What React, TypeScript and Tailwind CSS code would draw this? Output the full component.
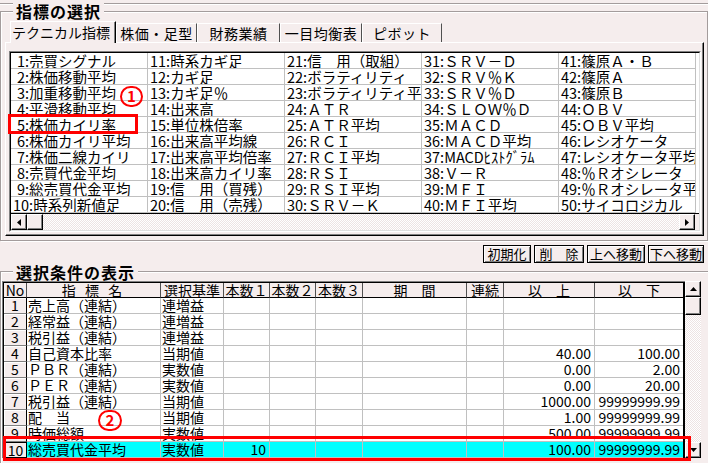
import React from "react";

const upperCols: string[][] = [
  ["売買シグナル", "株価移動平均", "加重移動平均", "平滑移動平均", "株価カイリ率", "株価カイリ平均", "株価二線カイリ", "売買代金平均", "総売買代金平均", "時系列新値足"],
  ["時系カギ足", "カギ足", "カギ足％", "出来高", "単位株倍率", "出来高平均線", "出来高平均倍率", "出来高カイリ率", "信　用（買残）", "信　用（売残）"],
  ["信　用（取組）", "ボラティリティ", "ボラティリティ平", "ＡＴＲ", "ＡＴＲ平均", "ＲＣＩ", "ＲＣＩ平均", "ＲＳＩ", "ＲＳＩ平均", "ＳＲＶ－Ｋ"],
  ["ＳＲＶ－Ｄ", "ＳＲＶ％Ｋ", "ＳＲＶ％Ｄ", "ＳＬＯＷ％Ｄ", "ＭＡＣＤ", "ＭＡＣＤ平均", "MACDﾋｽﾄｸﾞﾗﾑ", "Ｖ－Ｒ", "ＭＦＩ", "ＭＦＩ平均"],
  ["篠原Ａ・Ｂ", "篠原Ａ", "篠原Ｂ", "ＯＢＶ", "ＯＢＶ平均", "レシオケータ", "レシオケータ平均", "％Ｒオシレータ", "％Ｒオシレータ平", "サイコロジカル"],
];

const rows = [
  { name: "売上高（連結）", kijun: "連増益", hon1: "", ijo: "", ika: "" },
  { name: "経常益（連結）", kijun: "連増益", hon1: "", ijo: "", ika: "" },
  { name: "税引益（連結）", kijun: "連増益", hon1: "", ijo: "", ika: "" },
  { name: "自己資本比率", kijun: "当期値", hon1: "", ijo: "40.00", ika: "100.00" },
  { name: "ＰＢＲ（連結）", kijun: "実数値", hon1: "", ijo: "0.00", ika: "2.00" },
  { name: "ＰＥＲ（連結）", kijun: "実数値", hon1: "", ijo: "0.00", ika: "20.00" },
  { name: "税引益（連結）", kijun: "当期値", hon1: "", ijo: "1000.00", ika: "99999999.99" },
  { name: "配　当", kijun: "当期値", hon1: "", ijo: "1.00", ika: "99999999.99" },
  { name: "時価総額", kijun: "実数値", hon1: "", ijo: "500.00", ika: "99999999.99" },
  { name: "総売買代金平均", kijun: "実数値", hon1: "10", ijo: "100.00", ika: "99999999.99" },
];

const heads = ["No", "指 標 名", "選択基準", "本数１", "本数２", "本数３", "期　間", "連続", "以　上", "以　下"];

const raised =
  "border border-t-white border-l-white border-r-black border-b-black shadow-[inset_-1px_-1px_0_#808080]";

const Arrow = ({ dir }: { dir: "up" | "down" | "left" | "right" }) => {
  const pts = {
    up: "1,6 8,6 4.5,2",
    down: "1,2 8,2 4.5,6",
    left: "6,1 6,8 2,4.5",
    right: "2,1 2,8 6,4.5",
  }[dir];
  return (
    <svg width="9" height="9" viewBox="0 0 9 9">
      <polygon points={pts} fill="#000" />
    </svg>
  );
};

const ScrollBtn = ({ dir }: { dir: "up" | "down" | "left" | "right" }) => (
  <div className={`w-[16px] h-[16px] bg-[#f5eded] flex items-center justify-center shrink-0 ${raised}`}>
    <Arrow dir={dir} />
  </div>
);

const dither = "bg-[repeating-conic-gradient(#ffffff_0%_25%,#ede3e3_0%_50%)] bg-[length:2px_2px]";

const Tab = ({ label, w, active }: { label: string; w: number; active?: boolean }) =>
  active ? (
    <div
      style={{ width: w }}
      className="relative z-10 -mb-px h-[22px] bg-[#f5eded] border-t border-l border-white border-r border-r-black shadow-[inset_-1px_0_0_#808080] pl-[1px] text-[14px] leading-[20px] whitespace-nowrap"
    >
      {label}
    </div>
  ) : (
    <div
      style={{ width: w }}
      className="h-[19px] bg-[#f5eded] border-t border-l border-white border-r border-r-[#505050] text-[14px] leading-[18px] text-center whitespace-nowrap tracking-[0.5px]"
    >
      {label}
    </div>
  );

export default function App() {
  return (
    <div className="w-[708px] h-[463px] bg-[#f5eded] relative overflow-hidden text-black font-['Noto_Sans_CJK_JP','Noto_Sans',sans-serif]">
      <div className="pt-[3px]">
        <div className="h-[2px] border-t border-[#a39c9c] border-b border-b-white" />
      </div>

      {/* group 1 */}
      <div className="mt-[6px] h-[230px] border border-[#a39c9c] shadow-[inset_1px_1px_0_#ffffff,1px_1px_0_#ffffff]">
        <div className="-mt-[9px] ml-[12px] w-fit px-[3px] bg-[#f5eded] h-[16px] text-[16px] leading-[16px] font-bold tracking-[1px]">
          指標の選択
        </div>
        <div className="mt-[3px] ml-[9px] flex items-end h-[20px]">
          <Tab label="テクニカル指標" w={106} active />
          <Tab label="株価・足型" w={81} />
          <Tab label="財務業績" w={83} />
          <Tab label="一目均衡表" w={82} />
          <Tab label="ピボット" w={80} />
        </div>
        <div className={`ml-[4px] w-[699px] h-[194px] bg-[#f5eded] ${raised}`}>
          <div className="mt-[8px] ml-[3px] w-[692px] border border-t-[#808080] border-l-[#808080] border-r-white border-b-white">
            <div className="border border-t-black border-l-black border-r-[#dfdfdf] border-b-[#dfdfdf] bg-white">
              <div className="flex border-b border-black">
                <div className="grid grid-flow-col grid-rows-[repeat(10,16px)] grid-cols-[repeat(5,137px)]">
                  {upperCols.map((col, ci) =>
                    col.map((label, ri) => {
                      const n = ci * 10 + ri + 1;
                      return (
                        <div
                          key={n}
                          className="border-r border-b border-[#c0c0c0] pl-[2px] text-[14.5px] leading-[15px] whitespace-nowrap overflow-hidden"
                        >
                          {n < 10 && <span className="inline-block w-[4px]" />}
                          {n}:{label}
                        </div>
                      );
                    })
                  )}
                </div>
              </div>
              <div className="flex h-[16px] bg-[#f5eded]">
                <ScrollBtn dir="left" />
                <div className={`w-[16px] h-[16px] bg-[#f5eded] ${raised}`} />
                <div className={`flex-1 ${dither}`} />
                <ScrollBtn dir="right" />
                <div className="w-[4px] bg-[#f5eded]" />
              </div>
            </div>
          </div>
        </div>
      </div>

      {/* buttons */}
      <div className="mt-[4px] h-[18px] flex justify-end gap-[3px] pr-[4px]">
        {[
          ["初期化", 48],
          ["削　除", 50],
          ["上へ移動", 58],
          ["下へ移動", 56],
        ].map(([t, w]) => (
          <div
            key={t as string}
            style={{ width: w as number }}
            className="h-[18px] border border-black bg-[#f5eded] shadow-[inset_1px_1px_0_#ffffff,inset_-1px_-1px_0_#808080] text-[13px] leading-[16px] text-center whitespace-nowrap"
          >
            {t}
          </div>
        ))}
      </div>

      {/* group 2 */}
      <div className="mt-[8px] h-[200px] border-t border-l border-[#a39c9c] shadow-[inset_1px_1px_0_#ffffff]">
        <div className="-mt-[8px] ml-[12px] w-fit px-[3px] bg-[#f5eded] h-[16px] text-[16px] leading-[16px] font-bold tracking-[1px]">
          選択条件の表示
        </div>
        <div className="mt-[1px] ml-[1px] flex">
          <div className="border-t border-l border-[#808080]">
            <div className="border-t border-l border-black">
              <div className="grid grid-cols-[23px_134px_63px_46px_46px_47px_104px_37px_91px_88px] border-r-2 border-black">
                {heads.map((h, i) => (
                  <div
                    key={h}
                    className={`h-[15px] border-b border-black bg-[#f5eded] text-[14px] leading-[14px] text-center whitespace-nowrap overflow-hidden ${
                      i === heads.length - 1 ? "" : "border-r border-r-[#505050]"
                    } ${i === 1 ? "tracking-[3px]" : ""}`}
                  >
                    {h}
                  </div>
                ))}
                {rows.map((r, i) => {
                  const sel = i === 9;
                  const cell = `h-[16px] border-b border-r border-[#c0c0c0] text-[14px] leading-[15px] whitespace-nowrap overflow-hidden ${
                    sel ? "bg-[#00ffff]" : "bg-white"
                  }`;
                  return (
                    <React.Fragment key={i}>
                      <div
                        className={`h-[16px] bg-[#f5eded] border-r border-black text-[14px] leading-[15px] text-center ${
                          sel
                            ? "border border-black"
                            : "border-b border-b-[#808080] shadow-[inset_1px_1px_0_#ffffff]"
                        }`}
                      >
                        {i + 1}
                      </div>
                      <div className={`${cell} pl-[1px]`}>{r.name}</div>
                      <div className={`${cell} pl-[1px]`}>{r.kijun}</div>
                      <div className={`${cell} text-right pr-[3px]`}>{r.hon1}</div>
                      <div className={cell} />
                      <div className={cell} />
                      <div className={cell} />
                      <div className={cell} />
                      <div className={`${cell} text-right pr-[3px]`}>{r.ijo}</div>
                      <div className={`${cell} text-right pr-[3px] border-r-0`}>{r.ika}</div>
                    </React.Fragment>
                  );
                })}
              </div>
            </div>
          </div>
          <div className="w-[17px] h-[177px] flex flex-col">
            <ScrollBtn dir="up" />
            <div className={`w-[16px] h-[18px] bg-[#f5eded] ${raised}`} />
            <div className={`flex-1 w-[16px] ${dither}`} />
            <ScrollBtn dir="down" />
          </div>
        </div>
      </div>

      {/* annotations */}
      <div className="absolute left-[8px] top-[114px] w-[130px] h-[20px] border-[3px] border-[#ff0000]" />
      <div className="absolute left-[120px] top-[86px] w-[23px] h-[21px] rounded-full border-[2.5px] border-[#ff0000] text-[#ff0000] text-[15px] leading-[16px] font-bold text-center">
        1
      </div>
      <div className="absolute left-[98px] top-[410px] w-[24px] h-[21px] rounded-full border-[2.5px] border-[#ff0000] text-[#ff0000] text-[15px] leading-[16px] font-bold text-center">
        2
      </div>
      <div className="absolute left-[3px] top-[436px] w-[688px] h-[25px] border-[3px] border-[#ff0000]" />
    </div>
  );
}
